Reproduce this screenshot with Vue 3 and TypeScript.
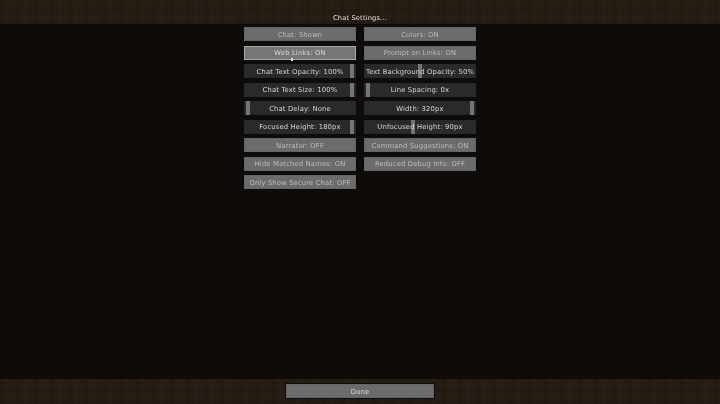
<script setup lang="ts">
interface Option {
  label: string
  slider?: number
  active?: boolean
}

const options: Option[] = [
  { label: 'Chat: Shown' },
  { label: 'Colors: ON' },
  { label: 'Web Links: ON', active: true },
  { label: 'Prompt on Links: ON' },
  { label: 'Chat Text Opacity: 100%', slider: 100 },
  { label: 'Text Background Opacity: 50%', slider: 50 },
  { label: 'Chat Text Size: 100%', slider: 100 },
  { label: 'Line Spacing: 0x', slider: 0 },
  { label: 'Chat Delay: None', slider: 0 },
  { label: 'Width: 320px', slider: 100 },
  { label: 'Focused Height: 180px', slider: 100 },
  { label: 'Unfocused Height: 90px', slider: 43 },
  { label: 'Narrator: OFF' },
  { label: 'Command Suggestions: ON' },
  { label: 'Hide Matched Names: ON' },
  { label: 'Reduced Debug Info: OFF' },
  { label: 'Only Show Secure Chat: OFF' },
]
</script>

<template>
  <div class="screen">
    <header class="band header">
      <h1 class="title">Chat Settings...</h1>
    </header>
    <main class="list">
      <div class="grid">
        <div
          v-for="o in options"
          :key="o.label"
          class="btn"
          :class="{ slider: o.slider !== undefined, active: o.active }"
        >
          <span
            v-if="o.slider !== undefined"
            class="handle"
            :style="{ left: `calc((100% - 6px) * ${o.slider / 100})` }"
          ></span>
          <span class="label">{{ o.label }}</span>
          <span v-if="o.active" class="cursor"></span>
        </div>
      </div>
    </main>
    <footer class="band footer">
      <div class="btn done"><span class="label">Done</span></div>
    </footer>
  </div>
</template>

<style>
html, body { margin: 0; background: #0e0b08; }
</style>

<style scoped>
.screen {
  width: 720px;
  height: 404px;
  display: flex;
  flex-direction: column;
  overflow: hidden;
  background: #0e0b08;
  font-family: "DejaVu Sans", sans-serif;
}
.band {
  background-color: #251c14;
  background-image:
    repeating-linear-gradient(90deg, rgba(0,0,0,.08) 0 3px, transparent 3px 7px, rgba(70,50,30,.08) 7px 10px, transparent 10px 17px),
    repeating-linear-gradient(0deg, rgba(0,0,0,.08) 0 2px, transparent 2px 5px, rgba(70,50,30,.08) 5px 7px, transparent 7px 13px);
}
.header {
  height: 24px;
  flex: none;
  display: flex;
  align-items: center;
  justify-content: center;
}
.title {
  margin: 0;
  padding-top: 12px;
  font-size: 6.6px;
  font-weight: 400;
  color: #e6e6e6;
  letter-spacing: .2px;
  filter: blur(.35px);
}
.list {
  flex: 1;
  padding-top: 3px;
  display: flex;
  justify-content: center;
  align-items: flex-start;
}
.grid {
  display: grid;
  grid-template-columns: 112px 112px;
  grid-auto-rows: 14px;
  column-gap: 8px;
  row-gap: 4.5px;
}
.btn {
  position: relative;
  box-sizing: border-box;
  display: flex;
  align-items: center;
  justify-content: center;
  padding-top: 1px;
  background: #6c6c6c;
  border: 1px solid #646464;
  outline: 1px solid #0c0c0c;
  color: #bdbdbd;
  font-size: 6.8px;
  white-space: nowrap;
}
.label {
  position: relative;
  filter: blur(.4px);
  letter-spacing: .15px;
}
.btn.slider {
  background: #2a2a2a;
  border-color: #282828;
  color: #d6d6d6;
}
.btn.active {
  background: #767676;
  border-color: #a6a6a6;
  color: #d8d8d8;
}
.handle {
  position: absolute;
  top: -1px;
  bottom: -1px;
  width: 4px;
  margin: 0 1px;
  background: #747474;
}
.cursor {
  position: absolute;
  left: 46px;
  bottom: -2px;
  width: 2px;
  height: 3px;
  background: #e0e0e0;
}
.footer {
  height: 25px;
  flex: none;
  display: flex;
  justify-content: center;
  padding-top: 5px;
  box-sizing: border-box;
}
.done {
  width: 148px;
  height: 14px;
  color: #dcdcdc;
}
</style>
